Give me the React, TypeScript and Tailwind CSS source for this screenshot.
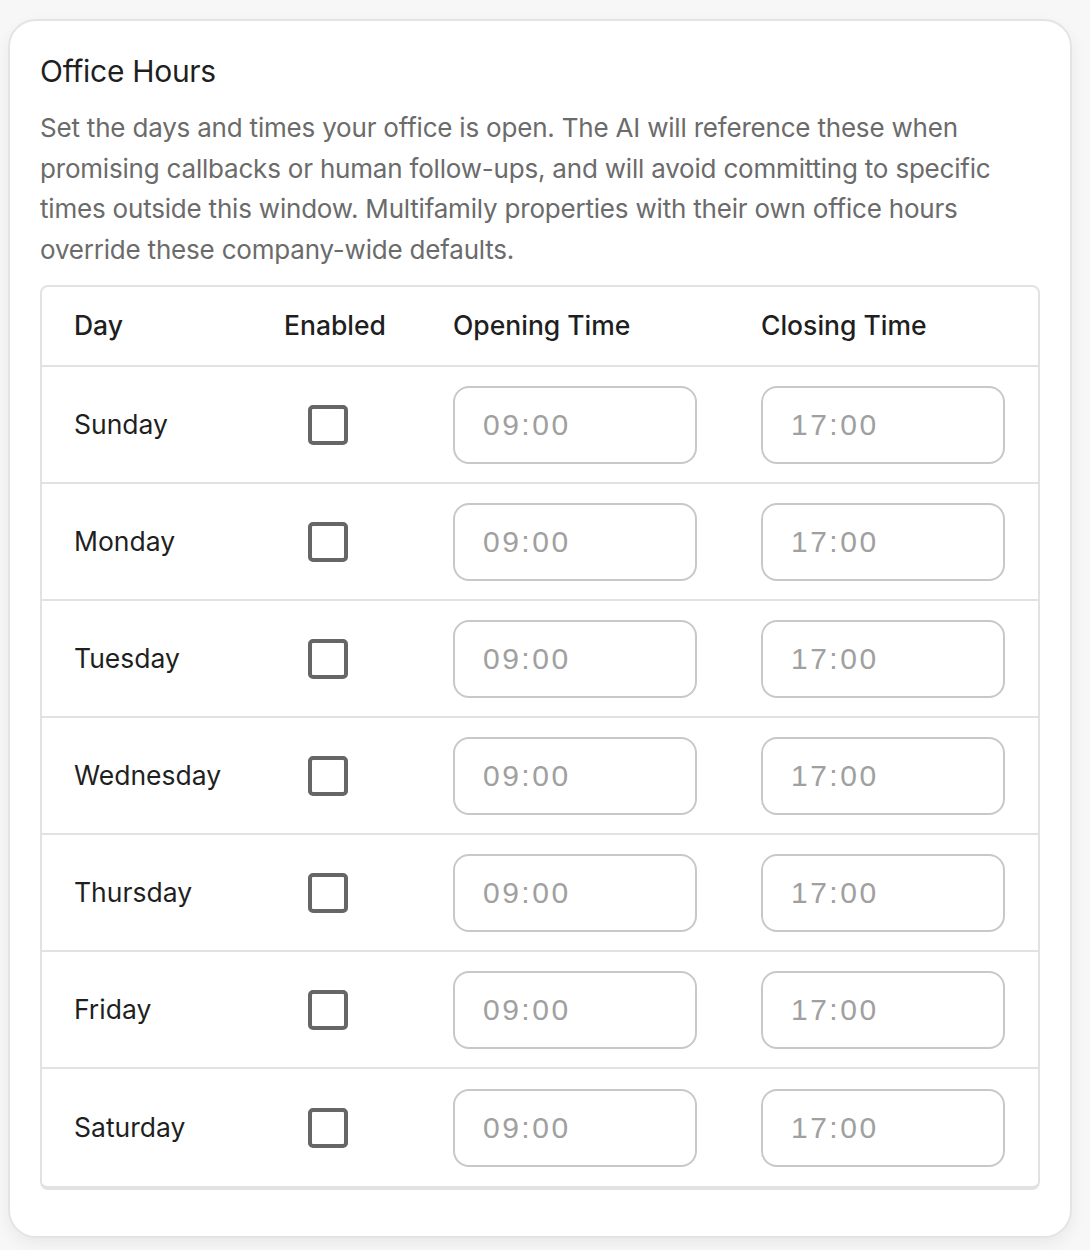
import React from 'react';

const DAYS = ['Sunday', 'Monday', 'Tuesday', 'Wednesday', 'Thursday', 'Friday', 'Saturday'];

function TimeBox({ value }: { value: string }) {
  return (
    <div className="w-[244px] h-[78px] rounded-[16px] border-2 border-[#c8c8c8] flex items-center pl-[28px] text-[30px] text-[#a0a0a0] tracking-[2.5px] font-['Liberation_Sans',sans-serif]">
      {value}
    </div>
  );
}

export default function App() {
  return (
    <div className="min-h-screen bg-[#f7f7f7] pt-[19px] pl-[8px] font-['Inter',sans-serif]">
      <div className="w-[1064px] bg-white rounded-[28px] border-2 border-[#e4e4e4] shadow-[0_6px_16px_rgba(0,0,0,0.06)] px-[30px] pt-[31px] pb-[46px]">
        <h1 className="text-[30px] leading-[38px] text-[#1f1f1f] tracking-[-0.3px]">Office Hours</h1>
        <p className="mt-[18px] text-[26px] leading-[40.5px] text-[#6b6b6b] tracking-[-0.2px]">
          Set the days and times your office is open. The AI will reference these when promising callbacks or human follow-ups, and will avoid committing to specific times outside this window. Multifamily properties with their own office hours override these company-wide defaults.
        </p>
        <div className="mt-[15px] rounded-[8px] border-2 border-[#e2e2e2] border-b-[4px] overflow-hidden">
          <div className="h-[80px] flex items-center text-[26.5px] font-medium text-[#1f1f1f] border-b-2 border-[#e2e2e2]">
            <div className="w-[242px] pl-[32px]">Day</div>
            <div className="w-[169px]">Enabled</div>
            <div className="w-[308px]">Opening Time</div>
            <div>Closing Time</div>
          </div>
          {DAYS.map((d, i) => (
            <div
              key={d}
              className={`h-[117px] flex items-center text-[26.5px] text-[#1f1f1f] ${i < DAYS.length - 1 ? 'border-b-2 border-[#e2e2e2]' : ''}`}
            >
              <div className="w-[242px] pl-[32px]">{d}</div>
              <div className="w-[169px] pl-[24px]">
                <div className="w-[40px] h-[40px] rounded-[5px] border-[4px] border-[#666666]" />
              </div>
              <div className="w-[308px]">
                <TimeBox value="09:00" />
              </div>
              <div>
                <TimeBox value="17:00" />
              </div>
            </div>
          ))}
        </div>
      </div>
    </div>
  );
}
